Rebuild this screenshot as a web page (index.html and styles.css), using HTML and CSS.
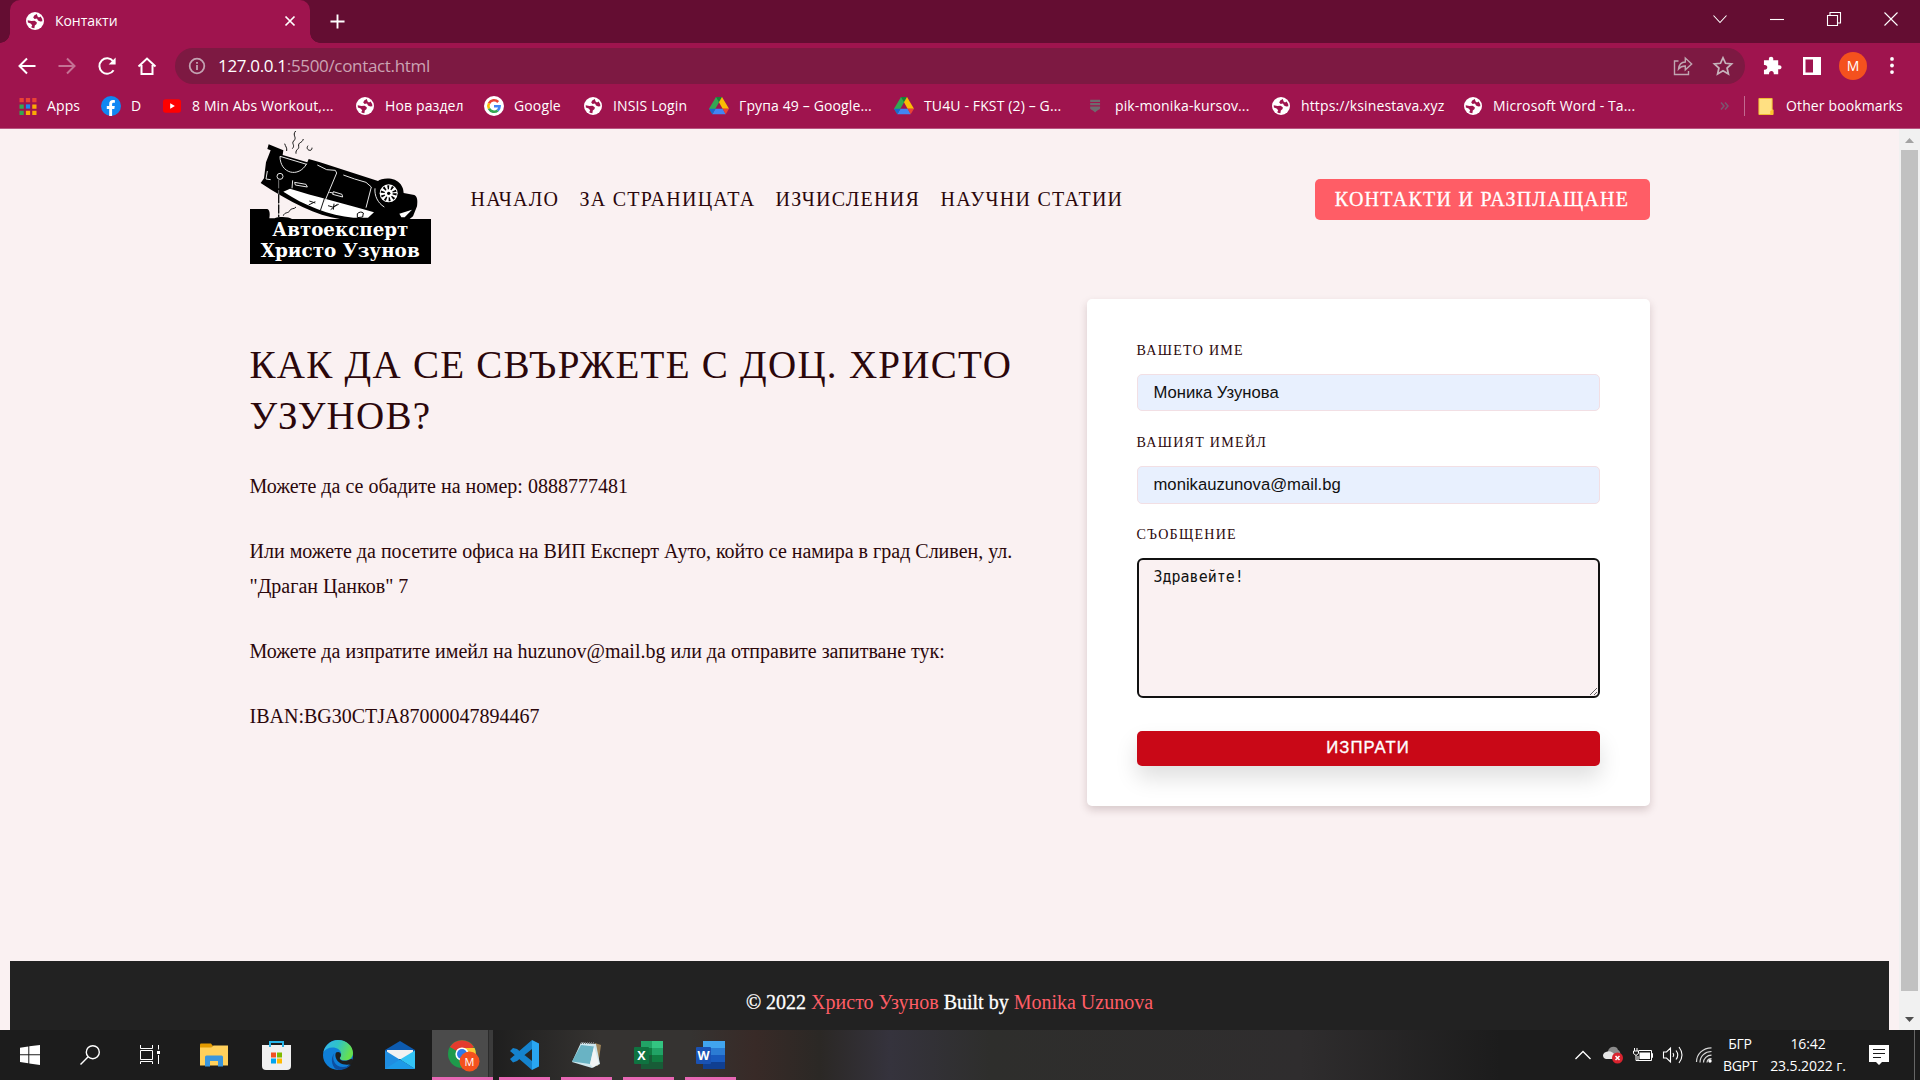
FILE: index.html
```html
<!DOCTYPE html>
<html lang="bg">
<head>
<meta charset="utf-8">
<title>Контакти</title>
<link rel="stylesheet" href="styles.css">
</head>
<body>
<svg class="defs" width="0" height="0">
  <symbol id="globe" viewBox="0 0 18 18">
    <circle cx="9" cy="9" r="9" fill="#fff"/>
    <path d="M10.800 2 8.200 3.600 7.200 5.600 8.600 7 11 6.600 12 8.400 14.200 9.400 16.400 9.200A7.500 7.500 0 0 0 14.600 4.600L13 5.600 11.600 4.400Z" fill="#9f144e"/>
    <path d="M1.700 8.200 5.400 9 8.600 8.800 10.800 10.200 10.600 12 8.800 13.400 8.400 16.200A7.500 7.500 0 0 1 5.200 15.200L6.200 13.200 4.600 11.600 1.900 10.600Z" fill="#9f144e"/>
  </symbol>
  <symbol id="drive" viewBox="0 0 20 18">
    <path d="M7 0h6L9.900 5.600 3.300 17.200 0 11.800Z" fill="#34a853"/>
    <path d="M7 0h6L10 5.300Z" fill="#188038"/>
    <path d="M13 0 20 11.800h-6.400L10 5.300Z" fill="#fbbc04"/>
    <path d="M6.500 11.800h7.200L16.700 17.200H3.300Z" fill="#4285f4"/>
    <path d="M0 11.800h6.500L3.300 17.200Z" fill="#1967d2"/>
    <path d="M13.600 11.800H20l-3.300 5.400Z" fill="#ea4335"/>
  </symbol>
</svg>

<div class="tabs">
  <div class="tab">
    <svg class="i18" viewBox="0 0 18 18"><use href="#globe"/></svg>
    <span class="tab-title">Контакти</span>
    <svg class="tab-close" viewBox="0 0 10 10"><path d="M.5.5l9 9M9.500.5l-9 9"/></svg>
  </div>
  <svg class="tab-new" viewBox="0 0 16 16"><path d="M8 0.500v15M.5 8h15"/></svg>
  <div class="win">
    <svg viewBox="0 0 14 14"><path d="M.5 3.500 7 10.500l6.500-7"/></svg>
    <svg viewBox="0 0 14 14"><path d="M0 7.500h14"/></svg>
    <svg viewBox="0 0 14 14"><path d="M.5 3.500h10v10H.5zM3 3.500v-3h10.500V11h-3"/></svg>
    <svg viewBox="0 0 14 14"><path d="M.5.5l13 13M13.500.5l-13 13"/></svg>
  </div>
</div>

<div class="toolbar">
  <svg class="nav-i" viewBox="0 0 20 20"><path d="M18.500 10H3M10 2.500 2.500 10 10 17.500"/></svg>
  <svg class="nav-i dim" viewBox="0 0 20 20"><path d="M1.500 10H17M10 2.500 17.500 10 10 17.500"/></svg>
  <svg class="nav-i" viewBox="0 0 20 20"><path d="M16.600 14.200A7.700 7.700 0 1 1 16.200 5.300"/><path d="M18.600 1.500v7h-7z" fill="#fff" stroke="none"/></svg>
  <svg class="nav-i" viewBox="0 0 20 20"><path d="M1.500 10.500 10 2.500l8.500 8M4.500 9v9h11V9"/></svg>
  <div class="omni">
    <svg class="info" viewBox="0 0 18 18"><circle cx="9" cy="9" r="7.300"/><path d="M9 8v5M9 5v1.800"/></svg>
    <span class="url"><b>127.0.0.1</b>:5500/contact.html</span>
    <svg class="share" viewBox="0 0 20 20"><path d="M5.500 5H1.500v13.500h14V15M5.500 13c.5-4.500 3-6.800 6.800-7V2l6.400 6-6.400 5.800V10c-3 0-5 .8-6.800 3z"/></svg>
    <svg class="star" viewBox="0 0 20 20"><path d="M10 2.500l2.300 5 5.500.6-4.100 3.700 1.200 5.400L10 14.400l-4.900 2.800 1.200-5.400L2.200 8.100l5.500-.6z"/></svg>
  </div>
  <svg class="puzzle" viewBox="0 0 20 20"><path d="M1 4.500h5.300C5.800 2 6.800.8 8.500.8s2.800 1.200 2.200 3.700H16v5.200c2.200-.4 3.500.6 3.500 2.100s-1.300 2.600-3.500 2.100v5.300h-4.700c.3-2.300-.8-3.400-2.400-3.400s-2.800 1.100-2.500 3.400H1v-4.800c2.300.3 3.500-.8 3.500-2.500S3.300 9.200 1 9.500z" fill="#fff"/></svg>
  <svg class="panel" viewBox="0 0 18 18"><path d="M0 0h18v18H0zM2.500 2.500v13h7.500v-13z" fill="#fff" fill-rule="evenodd"/></svg>
  <span class="avatar">M</span>
  <svg class="dots" viewBox="0 0 4 18"><circle cx="2" cy="2" r="2"/><circle cx="2" cy="9" r="2"/><circle cx="2" cy="16" r="2"/></svg>
</div>

<div class="bookmarks">
  <div class="bm"><svg class="ic i16" viewBox="0 0 16 16"><path d="M0 0h4v4H0zM6 0h4v4H6zM12 0h4v4h-4z" fill="#ea4335"/><path d="M0 6h4v4H0zM0 12h4v4H0z" fill="#34a853"/><path d="M6 6h4v4H6z" fill="#1a87f0"/><path d="M12 6h4v4h-4zM6 12h4v4H6zM12 12h4v4h-4z" fill="#fbab05"/></svg><span>Apps</span></div>
  <div class="bm"><svg class="ic fb" viewBox="0 0 20 20"><circle cx="10" cy="10" r="10" fill="#1087f3"/><path d="M8.200 20v-7H5.800v-3h2.400V8c0-2.600 1.500-4 3.700-4 .9 0 1.700.1 2 .2v2.500h-1.300c-1.100 0-1.500.6-1.500 1.400V10h2.700l-.5 3h-2.200v7z" fill="#fff"/></svg><span>D</span></div>
  <div class="bm"><svg class="ic" viewBox="0 0 20 20"><rect x="0" y="2.500" width="20" height="15" rx="3" fill="#f00"/><path d="M8 7l5.200 3L8 13z" fill="#fff"/></svg><span>8 Min Abs Workout,...</span></div>
  <div class="bm"><svg class="ic i18" viewBox="0 0 18 18"><use href="#globe"/></svg><span>Нов раздел</span></div>
  <div class="bm"><svg class="ic fb" viewBox="0 0 20 20"><circle cx="10" cy="10" r="10" fill="#fff"/><g fill="none" stroke-width="2.600"><path d="M14.200 6A5.700 5.700 0 0 0 5 7.300" stroke="#ea4335"/><path d="M5 7.300a5.700 5.700 0 0 0 0 5.400" stroke="#fbbc05"/><path d="M5 12.700a5.700 5.700 0 0 0 8.700 1.700" stroke="#34a853"/><path d="M13.700 14.400A5.600 5.600 0 0 0 15.600 10.300H10" stroke="#4285f4"/></g></svg><span>Google</span></div>
  <div class="bm"><svg class="ic i18" viewBox="0 0 18 18"><use href="#globe"/></svg><span>INSIS Login</span></div>
  <div class="bm"><svg class="ic" viewBox="0 0 20 18"><use href="#drive"/></svg><span>Група 49 – Google...</span></div>
  <div class="bm"><svg class="ic" viewBox="0 0 20 18"><use href="#drive"/></svg><span>TU4U - FKST (2) – G...</span></div>
  <div class="bm"><svg class="ic pik" viewBox="0 0 20 20"><path d="M3.500 3h11v2.500h-11zM3.500 6.800h11v2.400h-11zM3.500 10.500h11v2.200c0 1-2.500 1.200-5.500 4.500-3-3.300-5.500-3.500-5.500-4.500z" fill="#6f6a6e"/></svg><span>pik-monika-kursov...</span></div>
  <div class="bm"><svg class="ic i18" viewBox="0 0 18 18"><use href="#globe"/></svg><span>https://ksinestava.xyz</span></div>
  <div class="bm"><svg class="ic i18" viewBox="0 0 18 18"><use href="#globe"/></svg><span>Microsoft Word - Ta...</span></div>
  <div class="bm more"><svg viewBox="0 0 9 8"><path d="M1 .5 4 4 1 7.500M5 .5 8 4 5 7.500"/></svg></div>
  <div class="bm other"><svg class="ic i16" viewBox="0 0 16 18"><path d="M.5.500h14v12h1v5H.5z" fill="#ffe082" stroke="#f2c230"/><path d="M12.500 17.500v-4l3-1v5z" fill="#fbc52d"/></svg><span>Other bookmarks</span></div>
</div>

<div class="view">
  <div class="page">
    <header class="head">
      <svg class="logo" viewBox="30 12 543 408">
        <g fill="none" stroke="#111" stroke-width="3">
          <path d="M167 18c-12 14 6 18-6 30-8 8 6 12-4 23M190 42c-4 14-16 8-14 22 2 10-10 8-8 22M134 56c2 8 8 12 6 22M204 62c-6 8 0 14 6 14 4 0 6-3 6-8M130 272c4-12 16-6 20-16 4-8 12-2 18-10"/>
        </g>
        <path d="M86 58 130 76 128 90 202 112 206 102 240 112 414 168C424 158 466 154 482 178c8 12 8 18 9 26l32 6c10 6 10 18 8 34l-12 30-10 8H300C230 272 150 232 62 174L72 160 78 112 92 76 82 72Z"/>
        <path d="M130 200 150 191C220 214 320 236 402 262L384 278H340C270 272 190 240 130 200Z" fill="#fff"/>
        <path d="M478 266 516 254 494 277H484z" fill="#fff"/>
        <path d="M352 266c6-6 14-6 18-2l-2 12-16 2z" fill="#fff" stroke="#000" stroke-width="3"/>
        <g fill="none" stroke="#e6e6e6" stroke-width="3">
          <path d="M120 94c0 52 56 66 80 22M120 94l80 24M232 120l28 14 26 2 4 8-36 86M310 150l34 12 34 10 16 14-16 62M405 190c-2 22 8 44 28 56M158 166l-2 24M164 172l34 6 4 8-36-6zM280 200l26 8 2 8-30-8zM268 202l12 2M82 138l-4 24 14 2"/>
          <circle cx="120" cy="154" r="9"/>
        </g>
        <path d="M254 218 240 260" stroke="#111" stroke-width="3"/>
        <path d="M116 164V276" stroke="#777" stroke-width="3" stroke-dasharray="26 5"/>
        <path d="M116 208V276" stroke="#111" stroke-width="4" stroke-dasharray="26 5"/>
        <path d="M206 240l20-10M208 228l18 6M264 242l14 4 18-8M272 254l20-16M282 236l-2 18" stroke="#111" stroke-width="3" fill="none"/>
        <circle cx="446" cy="205" r="27" fill="#fff"/>
        <circle cx="446" cy="205" r="18" fill="none" stroke="#000" stroke-width="12" stroke-dasharray="5 6.300"/>
        <circle cx="446" cy="205" r="5"/>
        <path d="M30 252H82c8 4 8 14 6 28h16c8-6 44-6 52 2H573V417H30z"/>
        <g class="logo-text"><text x="97" y="334" textLength="408" lengthAdjust="spacingAndGlyphs">Автоексперт</text><text x="62" y="396" textLength="477" lengthAdjust="spacingAndGlyphs">Христо Узунов</text></g>
      </svg>
      <nav class="menu">
        <a>НАЧАЛО</a><a>ЗА СТРАНИЦАТА</a><a>ИЗЧИСЛЕНИЯ</a><a>НАУЧНИ СТАТИИ</a>
      </nav>
      <a class="cta">КОНТАКТИ И РАЗПЛАЩАНЕ</a>
    </header>
    <main class="main">
      <section class="info-col">
        <h1>КАК ДА СЕ СВЪРЖЕТЕ С ДОЦ. ХРИСТО УЗУНОВ?</h1>
        <p>Можете да се обадите на номер: 0888777481</p>
        <p>Или можете да посетите офиса на ВИП Експерт Ауто, който се намира в град Сливен, ул. "Драган Цанков" 7</p>
        <p>Можете да изпратите имейл на huzunov@mail.bg или да отправите запитване тук:</p>
        <p>IBAN:BG30CTJA87000047894467</p>
      </section>
      <form class="card">
        <label>ВАШЕТО ИМЕ</label>
        <input class="field" type="text" value="Моника Узунова">
        <label>ВАШИЯТ ИМЕЙЛ</label>
        <input class="field second" type="text" value="monikauzunova@mail.bg">
        <label>СЪОБЩЕНИЕ</label>
        <textarea class="area" spellcheck="false">Здравейте!</textarea>
        <button class="send" type="button">ИЗПРАТИ</button>
      </form>
    </main>
    <footer class="foot"><p>© 2022 <a>Христо Узунов</a> Built by <a>Monika Uzunova</a></p></footer>
  </div>
  <div class="scroll">
    <svg class="arrow up" viewBox="0 0 9 5"><path d="M0 5 4.500 0 9 5z" fill="#a3a3a3"/></svg>
    <div class="thumb"></div>
    <svg class="arrow" viewBox="0 0 9 5"><path d="M0 0h9L4.500 5z" fill="#505050"/></svg>
  </div>
</div>

<div class="taskbar">
  <div class="apps">
    <div class="app"><svg width="20" height="20" viewBox="0 0 20 20"><path d="M0 2.700 8.300 1.500V9.300H0zM9.300 1.300 20 0v9.300H9.300zM0 10.300h8.300v7.900L0 17zM9.300 10.300H20V20L9.300 18.500z" fill="#fff"/></svg></div>
    <div class="app"><svg width="20" height="20" viewBox="0 0 20 20"><g fill="none" stroke="#fff" stroke-width="1.400"><circle cx="12.800" cy="7.200" r="6.500"/><path d="M8.200 11.800.5 19.500"/></g></svg></div>
    <div class="app"><svg width="20" height="20" viewBox="0 0 20 20"><path d="M.5 0v3.500h12V0M.5 5.500h12v9H.5zM.5 19v-2.500h12V19M18.500 0v4.500M18.500 10v9" fill="none" stroke="#fff"/><path d="M17 6h3v3h-3z" fill="#fff"/></svg></div>
    <div class="app"><svg width="28" height="24" viewBox="0 0 28 24"><path d="M0 1.500Q0 .5 1 .5h10l2 2.500-2 2H0z" fill="#e29a00"/><path d="M0 4.500h11l2.500-2H28v20H0z" fill="#ffd05b"/><path d="M5 23.500V14q0-1.500 1.500-1.500h15Q23 12.500 23 14v9.500h-5V18h-8v5.500z" fill="#3a96dd"/></svg></div>
    <div class="app"><svg width="29" height="30" viewBox="0 0 29 30"><path d="M0 5h29v21q0 4-4 4H4q-4 0-4-4z" fill="#f0f0f0"/><path d="M8 7V2h13v5" fill="none" stroke="#27b5ea" stroke-width="2"/><path d="M9 12.500h5v5H9z" fill="#f25022"/><path d="M15 12.500h5v5h-5z" fill="#7fba00"/><path d="M9 18.500h5v5H9z" fill="#00a4ef"/><path d="M15 18.500h5v5h-5z" fill="#ffb900"/></svg></div>
    <div class="app"><svg width="30" height="30" viewBox="0 0 30 30"><defs><linearGradient id="eg" x1="0" x2="1" y1="0" y2=".3"><stop offset="0" stop-color="#36b4ee"/><stop offset=".5" stop-color="#2fc3c8"/><stop offset="1" stop-color="#66e04e"/></linearGradient></defs><circle cx="15" cy="15" r="15" fill="#0f7fd8"/><path d="M.5 12C2 5 8 0 15 0c8.500 0 15 6 15 13 0 5-4 7.500-8 7.500-3.500 0-5-1-5-2.200 0-1 1.200-1.500 1.200-4C18.200 10 14 7.500 9.500 7.500 5.500 7.500 2.500 9 .5 12z" fill="url(#eg)"/><path d="M11.500 13C8 19 12 27 20 27c3.500 0 5.500-.8 8-2.500C25 28.500 20 30 15.500 30 9 29 6.500 18 11.500 13z" fill="#0d4fa0"/><path d="M13 12.500c2.500-1.500 5 0 5 2.500 0 1.800-1.500 2.500-1.200 3.500.5 2 4.200 3 8.200 1.800l3.500-1.500 1.500 2-1 3q-4 1.500-9 .5c-6-1.500-9-8-7-11.800z" fill="#1e1e1e"/></svg></div>
    <div class="app"><svg width="30" height="28" viewBox="0 0 30 28"><path d="M0 9 15 0l15 9v4H0z" fill="#0d5bb0"/><path d="M2 9h26v9H2z" fill="#f2f2f2"/><path d="M0 9.500 30 28H0z" fill="#1f8de0"/><path d="M30 9.500V28L15 18.500z" fill="#33c4f5"/><path d="M0 28 15 18.500 30 28z" fill="#1d9ae8"/></svg></div>
    <div class="app active"><svg width="32" height="32" viewBox="0 0 32 32"><circle cx="14" cy="14" r="14" fill="#1e9a4b"/><path d="M14 14 1.900 7A14 14 0 0 1 26 7z" fill="#e33b2e"/><path d="M14 8H26.600A14 14 0 0 1 14 28l6-10z" fill="#fcc934"/><circle cx="14" cy="14" r="6.600" fill="#fff"/><circle cx="14" cy="14" r="5" fill="#2f7be8"/><circle cx="21.500" cy="21.500" r="10" fill="#f4511e"/><text x="21.500" y="25.500" text-anchor="middle" font-size="11" fill="#fff">M</text></svg></div>
    <div class="app open"><svg width="30" height="30" viewBox="0 0 30 30"><path d="M22 0v30L0 11l3-3 4 1 15 12V9L7 21l-4 1.500L0 19z" fill="#1583ce"/><path d="M22 0l7 3.500v23L22 30z" fill="#29a6f2"/></svg></div>
    <div class="app open"><svg width="30" height="28" viewBox="0 0 30 28"><path d="M23 2 29 4 26 25 19 24z" fill="#9c8156"/><path d="M9 1.500 24 3 28 23 20 27 0 21z" fill="#cfe7ee"/><path d="M9 4 22 5.500 18 23 0 20.500z" fill="#69b3c4"/><path d="M22 5.500 18 23l3 3.500 6-4z" fill="#f1f4f5"/><path d="M9 2h14" stroke="#777" stroke-width="2" stroke-dasharray="1 1"/></svg></div>
    <div class="app open"><svg width="29" height="28" viewBox="0 0 29 28"><path d="M7 0h22v28H7z" fill="#185c37"/><path d="M7 0h11v7H7z" fill="#21a366"/><path d="M18 0h11v7H18z" fill="#33c481"/><path d="M7 7h22v7H7z" fill="#107c41"/><path d="M18 7h11v7H18z" fill="#21a366"/><path d="M18 14h11v7H18z" fill="#107c41"/><rect y="6" width="15" height="17" rx="1" fill="#0f7340"/><text x="7.500" y="19" text-anchor="middle" font-size="12.500" font-weight="700" fill="#fff">X</text></svg></div>
    <div class="app open"><svg width="29" height="28" viewBox="0 0 29 28"><path d="M7 0h22v7H7z" fill="#41a5ee"/><path d="M7 7h22v7H7z" fill="#2b7cd3"/><path d="M7 14h22v7H7z" fill="#185abd"/><path d="M7 21h22v7H7z" fill="#103f91"/><rect y="6" width="15" height="17" rx="1" fill="#1a52b3"/><text x="7.500" y="19" text-anchor="middle" font-size="12.500" font-weight="700" fill="#fff">W</text></svg></div>
  </div>
  <div class="tray">
    <svg width="16" height="10" viewBox="0 0 16 10"><path d="M.5 9 8 1.500 15.500 9" fill="none" stroke="#fff" stroke-width="1.300"/></svg>
    <svg class="t2" width="20" height="18" viewBox="0 0 20 18"><path d="M5 5C6 0 14-1 15 4c3 1 3 6 1 8H7z" fill="#8b8b8b"/><path d="M3 13c-4-1-4-6 0-7 3-2 7 0 8 2 3 0 4 3 3 5z" fill="#e6e6e6"/><circle cx="14.500" cy="12" r="5.500" fill="#d9232e"/><path d="M12.500 10l4 4m0-4-4 4" stroke="#fff" stroke-width="1.500"/></svg>
    <svg class="t3" width="20" height="14" viewBox="0 0 20 14"><path d="M5.500 2.500h13v10H5V8M18.500 5.500h1v4h-1M1.500 0v3M4 0v3M.5 3h5v2.500L3.500 7h-1L.5 5.500zM3 7v5.500h2" fill="none" stroke="#fff"/><path d="M6.500 4.500H17v6.500H6.500z" fill="#fff"/></svg>
    <svg class="t4" width="20" height="18" viewBox="0 0 20 18"><path d="M.5 6h3l4-4v14l-4-4h-3zM10 7q1.500 2 0 4M13 4.500q3.500 4.500 0 9M16 1q6 8 0 16" fill="none" stroke="#fff" stroke-width="1.100"/></svg>
    <svg class="t5" width="16" height="16" viewBox="0 0 16 16"><path d="M.5 15C.5 7 7 .8 15.500.8M4 15.500C4 9 9 4.500 15.500 4.500M7.500 15.500c0-4 3.500-7.300 8-7.300M11 15.500c.2-2 2-3.800 4.500-3.800" fill="none" stroke="#d8d8d8" stroke-width="1.200"/><circle cx="14" cy="14" r="1.700" fill="#fff"/></svg>
    <div class="two lang"><span>БГР</span><span>BGPT</span></div>
    <div class="two clock"><span>16:42</span><span>23.5.2022 г.</span></div>
    <svg class="t6" width="20" height="20" viewBox="0 0 20 20"><path d="M0 0h20v17h-7l-3 3-3-3H0z" fill="#fff"/><path d="M4 4.500h12M4 8.500h12M4 12.500h8" stroke="#1c1c1c" stroke-width="1.200"/></svg>
    <i class="peek"></i>
  </div>
</div>
</body>
</html>
```
FILE: styles.css
```css
* { box-sizing: border-box; }
body { margin: 0; width: 1920px; height: 1080px; overflow: hidden; display: flex; flex-direction: column; background: #9f144e; font-family: "Open Sans", sans-serif; color: #fff; }
svg { display: block; flex: none; overflow: visible; }
.defs { position: absolute; }
.i18 { width: 18px; height: 18px; }

/* Browser tab strip */
.tabs { flex: none; height: 43px; background: #640d32; display: flex; align-items: center; padding-left: 10px; }
.tab { position: relative; width: 300px; height: 43px; background: #9f144e; border-radius: 10px 10px 0 0; display: flex; align-items: center; padding: 0 15px 1px 16px; }
.tab::before, .tab::after { content: ""; position: absolute; bottom: 0; width: 10px; height: 10px; }
.tab::before { left: -10px; background: radial-gradient(circle at 0 0, transparent 9.5px, #9f144e 10px); }
.tab::after { right: -10px; background: radial-gradient(circle at 100% 0, transparent 9.5px, #9f144e 10px); }
.tab-title { margin-left: 11px; padding-bottom: 1px; font-size: 14px; letter-spacing: -.05px; }
.tab-close { width: 10px; height: 10px; margin-left: auto; fill: none; stroke: #fff; stroke-width: 1.7; }
.tab-new { width: 15px; height: 15px; margin-left: 20px; fill: none; stroke: #fff; stroke-width: 2; }
.win { margin-left: auto; display: flex; gap: 43px; padding: 0 22px 5px 0; }
.win svg { width: 14px; height: 14px; fill: none; stroke: #fff; stroke-width: 1.1; }

/* Address bar */
.toolbar { flex: none; height: 46px; padding: 0 26px 1px 17px; display: flex; align-items: center; }
.nav-i { width: 20px; height: 20px; margin-right: 20px; fill: none; stroke: #fff; stroke-width: 2; }
.dim { opacity: .4; }
.omni { width: 1570px; height: 36px; margin-left: -2px; border-radius: 18px; background: #7d1942; display: flex; align-items: center; padding: 0 11px 0 13px; }
.info { width: 18px; height: 18px; fill: none; stroke: #c3a3b2; stroke-width: 1.8; }
.url { margin-left: 12px; padding-bottom: 1px; font-size: 17px; letter-spacing: -.33px; color: #cba3b3; }
.url b { font-weight: 400; color: #fff; }
.share { width: 20px; height: 20px; margin-left: auto; fill: none; stroke: #c0a5b1; stroke-width: 1.4; }
.star { width: 22px; height: 22px; margin-left: 19px; fill: none; stroke: #c6b3bb; stroke-width: 1.6; }
.puzzle { width: 19px; height: 19px; margin-left: 18px; }
.panel { width: 18px; height: 18px; margin-left: 21px; }
.avatar { width: 28px; height: 28px; margin-left: 18px; border-radius: 50%; background: #f4511e; font-size: 14px; line-height: 28px; text-align: center; }
.dots { width: 4px; height: 17px; margin-left: auto; fill: #fff; }

/* Bookmarks bar */
.bookmarks { flex: none; height: 40px; padding: 0 0 5px 19px; display: grid; grid-template-columns: 82px 61px 193px 129px 99px 126px 185px 193px 184px 192px 257px 24px 1fr; align-items: center; border-bottom: 1px solid #b95581; }
.bm { display: flex; align-items: center; gap: 10px; font-size: 14px; letter-spacing: .13px; white-space: nowrap; }
.bm span { padding-bottom: 2px; }
.ic { width: 20px; height: 18px; }
.ic.fb { height: 20px; }
.ic.pik { width: 18px; height: 18px; }
.ic.i16 { width: 18px; height: 17px; }
.more svg { width: 9px; height: 8px; fill: none; stroke: #7b5670; stroke-width: 1.5; }
.other { border-left: 1px solid #c26a90; padding-left: 12px; height: 20px; gap: 11px; }

/* Page viewport */
.view { flex: none; height: 901px; display: flex; background: #faf1f2; }
.page { width: 1899px; padding: 0 10px; display: flex; flex-direction: column; font-family: "Liberation Serif", serif; color: #2b070b; }
.head { width: 1400px; height: 141px; margin: 0 auto; display: flex; align-items: center; }
.logo { width: 181px; height: 136px; margin-bottom: 5px; }
.logo-text { font: 700 56px "DejaVu Serif", serif; fill: #fff; }
.menu { margin-left: 40px; display: grid; grid-template-columns: 109px 196px 165px auto; font-size: 20px; letter-spacing: 1.25px; line-height: 25px; white-space: nowrap; }
.cta { margin-left: auto; width: 335px; height: 41px; border-radius: 5px; background: #ff5d66; color: #fff; font-size: 20px; line-height: 41px; letter-spacing: 1.25px; text-align: center; white-space: nowrap; -webkit-text-stroke: .3px #fff; }
.main { width: 1400px; height: 691px; margin: 0 auto; padding-top: 29px; display: flex; justify-content: space-between; align-items: flex-start; }
.info-col { width: 780px; padding-top: 40px; }
h1 { margin: 0 0 28px; font-size: 39.06px; font-weight: 400; line-height: 51px; letter-spacing: 1.25px; }
.info-col p { margin: 0 0 30px; font-size: 20px; line-height: 35px; }
.card { width: 563px; height: 507px; padding: 41px 50px 0; border-radius: 5px; background: #fff; display: flex; flex-direction: column; box-shadow: 0 4px 8px rgba(60, 20, 30, .18); }
.card label { flex: none; height: 21px; margin-bottom: 13px; font-size: 14.1px; line-height: 21px; letter-spacing: 1.25px; }
.field { flex: none; height: 37px; margin: 0 0 21px; padding: 0 16px; border: 1px solid #f2dfe4; border-radius: 5px; background: #e8f0fe; color: #111; font: 16.67px "Liberation Sans", sans-serif; }
.field.second { height: 38px; margin-bottom: 20px; }
.area { flex: none; height: 140px; margin: 0; padding: 7px 15px; border: 2px solid #111; border-radius: 6px; outline: 0; background: #faf1f2; color: #111; font: 15px/20px "DejaVu Sans Mono", monospace; resize: vertical; }
.send { height: 35px; margin-top: 33px; padding: 0 0 1px; border: 0; border-radius: 5px; background: #c90817; color: #fff; font: 16.67px "Liberation Sans", sans-serif; letter-spacing: 1.1px; -webkit-text-stroke: .35px #fff; box-shadow: 0 12px 22px rgba(0, 0, 0, .13); }
.foot { flex: 1; background: #222; color: #fff; text-align: center; font-size: 20px; -webkit-text-stroke: .3px #fff; }
.foot p { margin: 0; padding-top: 25px; line-height: 32px; }
.foot a { color: #ff5d66; -webkit-text-stroke: 0; }
.scroll { width: 21px; background: #f1f1f1; padding: 8px 2px 0; display: flex; flex-direction: column; align-items: center; }
.arrow { width: 9px; height: 5px; margin-top: 26px; }
.arrow.up { margin: 1px 0 7px; }
.thumb { width: 17px; height: 841px; background: #c1c1c1; }

/* Desktop taskbar */
.taskbar { flex: none; height: 50px; display: flex; justify-content: space-between; background: linear-gradient(90deg, #1c1c1c 480px, #353331 600px, #353331 690px, #382a27 755px, #2b2825 820px, #35333d 890px, #2e2e2c 990px, #2f2d2e 1300px, #1c1c1c 1500px); }
.apps { display: grid; grid-template-columns: 60px 60px 60px 68px 56px 68px 60px 61px 62px 62px 62px 62px; }
.app { display: flex; align-items: center; justify-content: center; }
.app:nth-child(7) { padding-right: 4px; }
.app.active { padding: 5px 0 0 3px; background: linear-gradient(90deg, #4b4b4b 56px, #2b2b2b 56px, #2b2b2b 57px, #3b3b3b 57px); border-bottom: 3px solid #e667b4; }
.app.open { width: 51px; margin-left: 6px; padding-top: 3px; border-bottom: 3px solid #e667b4; }
.tray { display: flex; align-items: center; padding-right: 5px; font-size: 14px; }
.t2 { margin-left: 12px; }
.t3 { margin-left: 10px; }
.t4 { margin-left: 10px; }
.t5 { margin-left: 13px; }
.two { display: flex; flex-direction: column; align-items: center; line-height: 22px; letter-spacing: -.1px; white-space: nowrap; }
.lang { width: 36px; margin-left: 10px; letter-spacing: -.3px; }
.clock { width: 76px; margin-left: 12px; }
.t6 { margin-left: 23px; }
.peek { width: 1px; height: 50px; margin-left: 25px; background: #666; }
```
